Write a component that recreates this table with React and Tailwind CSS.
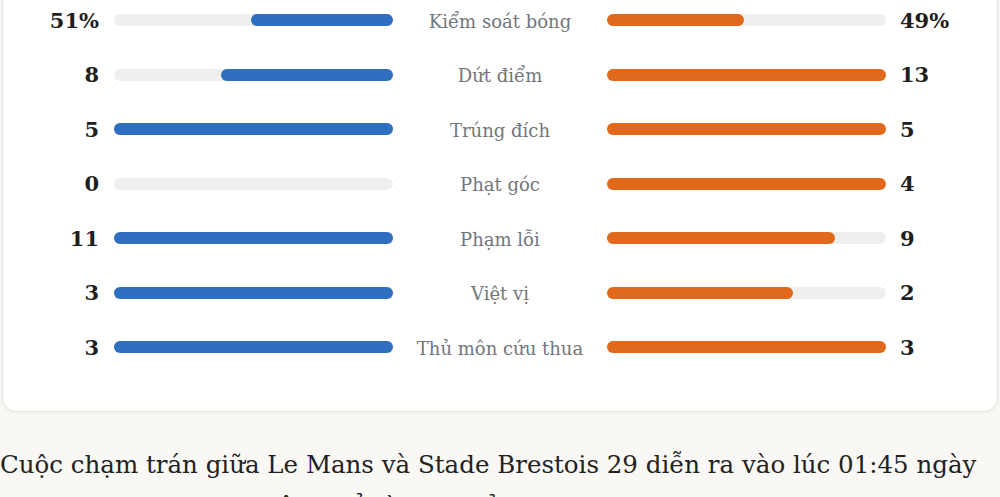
import React from 'react';

const stats = [
  { label: 'Kiểm soát bóng', home: 51, away: 49, suffix: '%' },
  { label: 'Dứt điểm', home: 8, away: 13 },
  { label: 'Trúng đích', home: 5, away: 5 },
  { label: 'Phạt góc', home: 0, away: 4 },
  { label: 'Phạm lỗi', home: 11, away: 9 },
  { label: 'Việt vị', home: 3, away: 2 },
  { label: 'Thủ môn cứu thua', home: 3, away: 3 },
];

const serif = { fontFamily: '"DejaVu Serif", "Liberation Serif", serif' };

const Bar = ({ value, max, side }) => {
  const pct = max ? (value / max) * 100 : 0;
  return (
    <div className={`flex h-[12px] w-[279px] rounded-full bg-[#efefed] ${side === 'home' ? 'justify-end' : 'justify-start'}`}>
      <div
        className={`h-full rounded-full ${side === 'home' ? 'bg-[#2f6fbf]' : 'bg-[#e0691b]'}`}
        style={{ width: `${pct}%` }}
      />
    </div>
  );
};

const StatRow = ({ stat }) => {
  const max = stat.suffix ? 100 : Math.max(stat.home, stat.away);
  return (
    <div className="flex h-[54.5px] items-center">
      <div className="w-[96px] text-right text-[21px] font-bold text-[#1f1f1f]">
        {stat.home}{stat.suffix}
      </div>
      <div className="ml-[15px]">
        <Bar value={stat.home} max={max} side="home" />
      </div>
      <div className="w-[214px] pt-[2px] text-center text-[18px] text-[#72767b]">{stat.label}</div>
      <Bar value={stat.away} max={max} side="away" />
      <div className="ml-[14px] text-[21px] font-bold text-[#1f1f1f]">
        {stat.away}{stat.suffix}
      </div>
    </div>
  );
};

export default function App() {
  return (
    <div className="h-[497px] overflow-hidden bg-[#f9f8f4]" style={serif}>
      <div className="mx-[2px] -mt-[40px] rounded-[14px] border border-[#e6e6e3] bg-white pt-[32px] pb-[36px] shadow-[0_1px_3px_rgba(0,0,0,0.06)]">
        {stats.map((s) => (
          <StatRow key={s.label} stat={s} />
        ))}
      </div>
      <p className="mt-[32px] text-[24.5px] leading-[42px] text-[#222]">
        Cuộc chạm trán giữa Le Mans và Stade Brestois 29 diễn ra vào lúc 01:45 ngày 20/10/2025, trong khuôn khổ vòng 8 giải Ligue 1.
      </p>
    </div>
  );
}
